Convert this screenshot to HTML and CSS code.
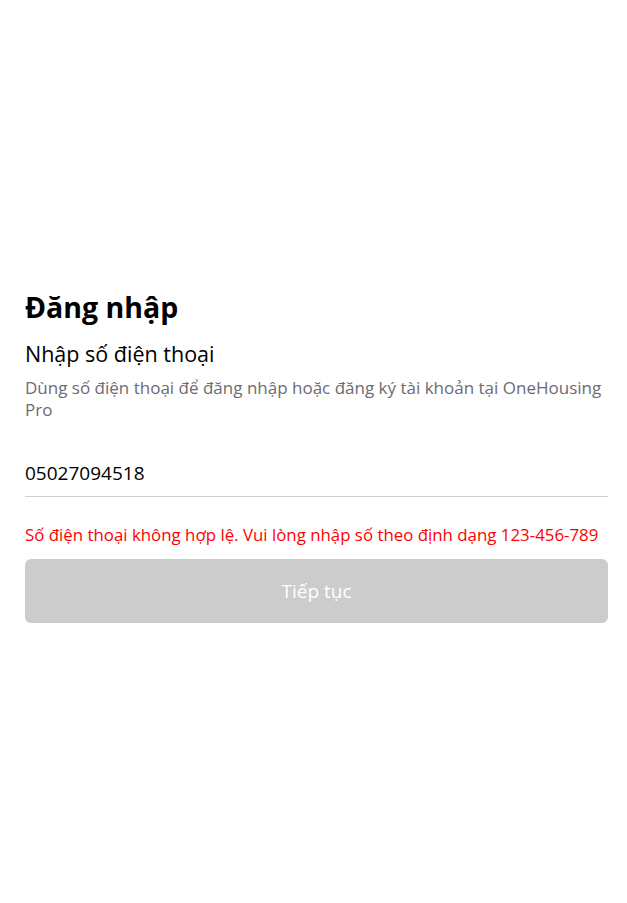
FILE: index.html
```html
<!DOCTYPE html>
<html lang="vi">
<head>
<meta charset="utf-8">
<link rel="stylesheet" href="styles.css">
</head>
<body>
<main class="page">
  <section class="login">
    <h1 class="title">Đăng nhập</h1>
    <h2 class="subtitle">Nhập số điện thoại</h2>
    <p class="desc">Dùng số điện thoại để đăng nhập hoặc đăng ký tài khoản tại OneHousing Pro</p>
    <div class="field">
      <div class="input">05027094518</div>
    </div>
    <p class="error">Số điện thoại không hợp lệ. Vui lòng nhập số theo định dạng 123-456-789</p>
    <button class="btn" type="button">Tiếp tục</button>
  </section>
</main>
</body>
</html>
```
FILE: styles.css
```css
* { box-sizing: border-box; }
html, body { margin: 0; padding: 0; background: #fff; }
body { font-family: "Open Sans", "Noto Sans", sans-serif; color: #000; }
.page { padding: 288px 19px 0 25px; }
.login { display: flex; flex-direction: column; }
.title { margin: 0; font-size: 28.5px; font-weight: 700; line-height: 38px; }
.subtitle { margin: 13px 0 0; font-size: 21.5px; font-weight: 400; line-height: 30px; }
.desc { margin: 8px 0 0; font-size: 17px; line-height: 22px; color: #6b6b73; }
.field { margin-top: 39px; border-bottom: 1px solid #cfcfcf; padding-bottom: 10px; }
.input { font-size: 19px; line-height: 26px; }
.error { margin: 27px 0 0; font-size: 16.85px; line-height: 22px; color: #ff0000; }
.btn { margin-top: 13px; height: 64px; border: none; border-radius: 6px; background: #cccccc; color: #fff; font-family: inherit; font-size: 19px; }
```
